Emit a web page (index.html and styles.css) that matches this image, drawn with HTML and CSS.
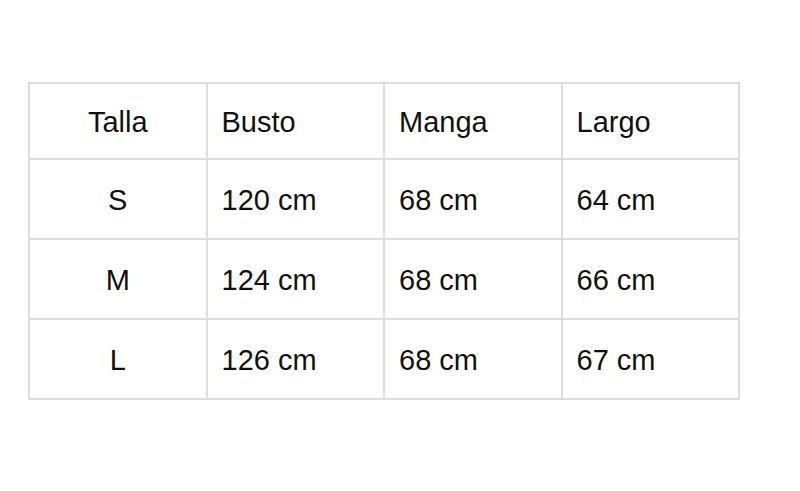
FILE: index.html
```html
<!DOCTYPE html>
<html lang="es">
<head>
<meta charset="utf-8">
<link rel="stylesheet" href="styles.css">
</head>
<body>
<div class="page">
<table class="sizes">
<tr class="head"><td class="c">Talla</td><td>Busto</td><td>Manga</td><td>Largo</td></tr>
<tr><td class="c">S</td><td>120 cm</td><td>68 cm</td><td>64 cm</td></tr>
<tr><td class="c">M</td><td>124 cm</td><td>68 cm</td><td>66 cm</td></tr>
<tr><td class="c">L</td><td>126 cm</td><td>68 cm</td><td>67 cm</td></tr>
</table>
</div>
</body>
</html>
```
FILE: styles.css
```css
html, body { margin: 0; padding: 0; background: #fff; }
.page { padding: 82px 0 0 28px; }
.sizes {
  border-collapse: collapse;
  width: 712px;
  table-layout: fixed;
  font-family: "Liberation Sans", Arial, sans-serif;
  font-size: 29px;
  color: #111;
}
.sizes td {
  border: 2px solid #ddd;
  height: 76px;
  padding: 2px 0 0 14px;
  vertical-align: middle;
  text-align: left;
}
.sizes tr.head td { height: 72px; }
.sizes td.c { text-align: center; padding: 2px 0 0 0; }
```
